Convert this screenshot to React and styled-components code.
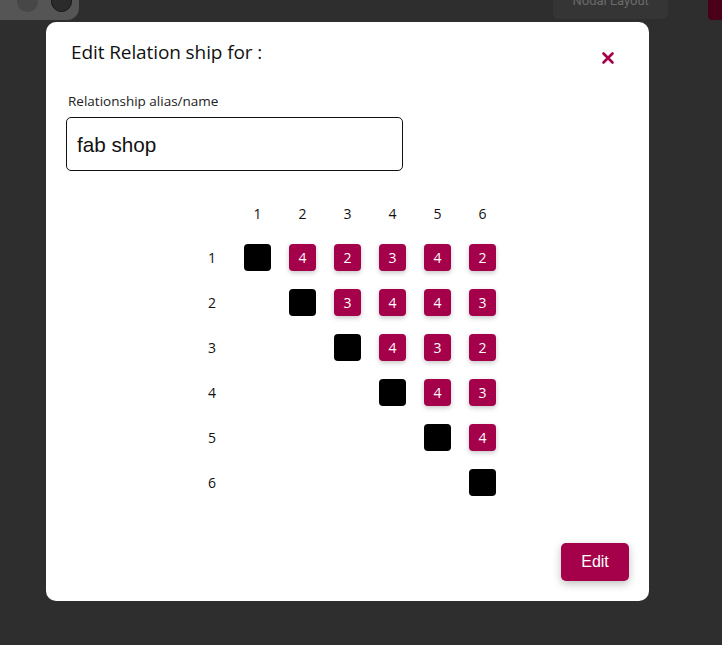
import React from "react";
import styled, { createGlobalStyle } from "styled-components";

const Global = createGlobalStyle`
  html, body { margin: 0; padding: 0; background: #2e2e2e; }
  body { width: 722px; height: 645px; overflow: hidden; font-family: "Open Sans", "Noto Sans", sans-serif; }
  * { box-sizing: border-box; }
`;

const ACCENT = "#a5004a";

const Page = styled.div`
  width: 722px;
  height: 645px;
  background: #2e2e2e;
  display: flex;
  flex-direction: column;
`;

const TopStrip = styled.div`
  height: 22px;
  display: flex;
  align-items: flex-start;
`;

const WindowPill = styled.div`
  width: 80px;
  height: 20px;
  background: #555;
  border-radius: 0 0 12px 0;
  display: flex;
  gap: 13px;
  padding-left: 17px;
  align-items: flex-end;
`;

const Dot = styled.div`
  width: 21px;
  height: 21px;
  margin-bottom: 8px;
  border-radius: 50%;
  background: ${(p) => (p.$dark ? "#2b2b2b" : "#474747")};
  border: ${(p) => (p.$dark ? "1px solid #151515" : "none")};
`;

const NodalBtn = styled.div`
  margin-left: 474px;
  width: 117px;
  height: 19px;
  background: #353535;
  border-radius: 0 0 5px 5px;
  color: #6b6b6b;
  font-family: Roboto, "Liberation Sans", sans-serif;
  font-size: 13px;
  display: flex;
  justify-content: center;
  align-items: flex-end;
  line-height: 1;
  overflow: hidden;
  padding-bottom: 12px;
`;

const RedTab = styled.div`
  margin-left: 40px;
  width: 14px;
  height: 20px;
  background: #4a0018;
  border-radius: 0 0 0 4px;
`;

const Modal = styled.div`
  margin-left: 46px;
  width: 603px;
  height: 579px;
  background: #fff;
  border-radius: 10px;
  padding: 20px;
  display: flex;
  flex-direction: column;
`;

const Header = styled.div`
  display: flex;
  justify-content: space-between;
  align-items: flex-start;
  padding-left: 5px;
  height: 26px;
`;

const Title = styled.h2`
  margin: -3px 0 0 0;
  font-size: 19px;
  font-weight: 500;
  color: #111;
  letter-spacing: -0.1px;
  line-height: 26px;
`;

const Close = styled.button`
  border: none;
  background: none;
  padding: 0;
  margin-right: 14px;
  margin-top: 9px;
  width: 14px;
  height: 14px;
  display: flex;
  cursor: pointer;
`;

const Label = styled.label`
  margin-top: 25px;
  padding-left: 2px;
  font-size: 13.5px;
  color: #222;
  line-height: 16px;
`;

const Input = styled.input`
  margin-top: 8px;
  width: 337px;
  height: 54px;
  border: 1px solid #111;
  border-radius: 5px;
  padding: 2px 10px 0;
  font-family: "Liberation Sans", Arial, sans-serif;
  font-size: 20.7px;
  color: #111;
  outline: none;
`;

const Matrix = styled.div`
  margin-top: 20px;
  margin-left: 123px;
  display: grid;
  grid-template-columns: 46px repeat(6, 45px);
  grid-template-rows: 44px;
  grid-auto-rows: 45px;
  align-items: center;
  justify-items: center;
`;

const Head = styled.div`
  font-size: 14px;
  color: #111;
`;

const Cell = styled.div`
  width: 27px;
  height: 27px;
  border-radius: 4px;
  background: ${(p) => (p.$diag ? "#000" : ACCENT)};
  box-shadow: ${(p) => (p.$diag ? "none" : "0 2px 5px rgba(0,0,0,0.22)")};
  color: #fff;
  font-size: 14px;
  display: flex;
  align-items: center;
  justify-content: center;
`;

const Footer = styled.div`
  margin-top: auto;
  display: flex;
  justify-content: flex-end;
`;

const EditBtn = styled.button`
  width: 68px;
  height: 38px;
  border: none;
  border-radius: 5px;
  background: ${ACCENT};
  color: #fff;
  font-family: "Liberation Sans", Arial, sans-serif;
  font-size: 16px;
  box-shadow: 0 3px 8px rgba(0,0,0,0.25);
  cursor: pointer;
`;

const values = [
  [null, 4, 2, 3, 4, 2],
  [null, null, 3, 4, 4, 3],
  [null, null, null, 4, 3, 2],
  [null, null, null, null, 4, 3],
  [null, null, null, null, null, 4],
  [null, null, null, null, null, null],
];

export default function App() {
  return (
    <>
      <Global />
      <Page>
        <TopStrip>
          <WindowPill>
            <Dot />
            <Dot $dark />
          </WindowPill>
          <NodalBtn>Nodal Layout</NodalBtn>
          <RedTab />
        </TopStrip>
        <Modal>
          <Header>
            <Title>Edit Relation ship for :</Title>
            <Close aria-label="close">
              <svg width="14" height="14" viewBox="0 0 14 14">
                <path d="M2.5 2.5 L11.5 11.5 M11.5 2.5 L2.5 11.5" stroke={ACCENT} strokeWidth="2.6" strokeLinecap="round" />
              </svg>
            </Close>
          </Header>
          <Label>Relationship alias/name</Label>
          <Input defaultValue="fab shop" />
          <Matrix>
            <span />
            {[1, 2, 3, 4, 5, 6].map((n) => (
              <Head key={"h" + n}>{n}</Head>
            ))}
            {values.map((row, r) => (
              <React.Fragment key={r}>
                <Head>{r + 1}</Head>
                {row.map((v, c) =>
                  c === r ? (
                    <Cell key={c} $diag />
                  ) : c > r ? (
                    <Cell key={c}>{v}</Cell>
                  ) : (
                    <span key={c} />
                  )
                )}
              </React.Fragment>
            ))}
          </Matrix>
          <Footer>
            <EditBtn>Edit</EditBtn>
          </Footer>
        </Modal>
      </Page>
    </>
  );
}
